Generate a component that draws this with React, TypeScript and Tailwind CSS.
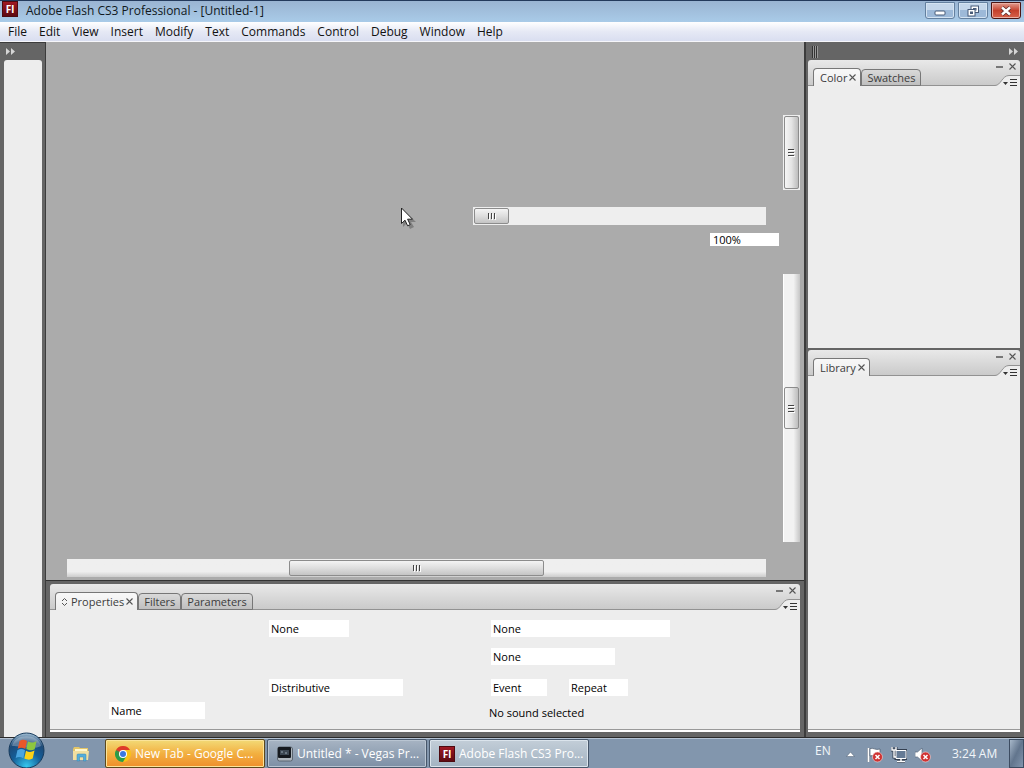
import React from 'react';

const MENUS = ['File', 'Edit', 'View', 'Insert', 'Modify', 'Text', 'Commands', 'Control', 'Debug', 'Window', 'Help'];

function FlashIcon() {
  return (
    <span className="flex h-4 w-4 shrink-0 items-center justify-center border border-[#4d0a10] bg-linear-to-b from-[#a01822] to-[#5e0a12] font-['Open_Sans',sans-serif] text-[10px] leading-none font-bold text-white">
      Fl
    </span>
  );
}

function TitleBar() {
  const button =
    'flex h-[17px] w-[30px] items-center justify-center rounded-b-[3px] border border-[#64809f] bg-linear-to-b from-[#c4d6ea] from-50% to-[#9db9d8] to-50% shadow-[inset_0_0_0_1px_#d4e3f2]';
  return (
    <header className="flex h-[22px] shrink-0 items-start gap-2 border-t border-[#243a5c] bg-linear-to-b from-[#9ab4d2] to-[#a9cbe8] pr-[3px] pl-0.5">
      <FlashIcon />
      <h1 className="flex-1 text-[12px] leading-5 text-[#101820]">Adobe Flash CS3 Professional - [Untitled-1]</h1>
      <div className="flex gap-[3px] pt-px">
        <button aria-label="Minimize" className={button}>
          <svg width="12" height="6" viewBox="0 0 12 6" className="mt-1">
            <rect x="1" y="1" width="10" height="4" rx="1" fill="#fff" stroke="#475a78" />
          </svg>
        </button>
        <button aria-label="Restore" className={button}>
          <svg width="12" height="12" viewBox="0 0 12 12" fill="#fff" stroke="#475a78">
            <rect x="4" y="1" width="7.5" height="6.5" />
            <rect x="6.500" y="3.500" width="2.500" height="1.500" />
            <rect x="1" y="4.500" width="7" height="6.500" />
            <rect x="3.500" y="7" width="2" height="1.500" />
          </svg>
        </button>
        <button
          aria-label="Close"
          className="flex h-[17px] w-[30px] items-center justify-center rounded-b-[3px] border border-[#4b1512] bg-linear-to-b from-[#e09a8e] via-[#c4402c] via-50% to-[#d8614a] shadow-[inset_0_0_0_1px_#eab0a5]"
        >
          <svg width="12" height="10" viewBox="0 0 12 10">
            <path d="M2 1.500 10 8.500M10 1.500 2 8.500" stroke="#5a2a2a" strokeWidth="4" />
            <path d="M2 1.500 10 8.500M10 1.500 2 8.500" stroke="#fff" strokeWidth="2.400" />
          </svg>
        </button>
      </div>
    </header>
  );
}

function MenuBar() {
  return (
    <nav className="flex h-5 shrink-0 items-center gap-3 border-b border-[#f6f6fa] bg-linear-to-b from-white via-[#e6e9f5] via-50% to-[#d9def0] px-2 text-[12px] leading-4 text-[#111]">
      {MENUS.map((name) => (
        <button key={name}>{name}</button>
      ))}
    </nav>
  );
}

function CollapseArrows() {
  return (
    <svg width="9" height="7" viewBox="0 0 9 7" fill="#d6d6d6">
      <path d="M0 0 4 3.500 0 7zM5 0 9 3.500 5 7z" />
    </svg>
  );
}

function CloseMark() {
  return (
    <svg width="7" height="7" viewBox="0 0 7 7" stroke="#555" strokeWidth="1.100">
      <path d="M.5.5 6.500 6.500M6.500.5.5 6.500" />
    </svg>
  );
}

function PanelHeader({ tabs, cycle = false }: { tabs: string[]; cycle?: boolean }) {
  return (
    <div className="flex h-[26px] shrink-0 justify-between rounded-t-[3px] bg-linear-to-b from-[#e9e9e9] to-[#c9c9c9] shadow-[inset_0_-1px_0_#929292]">
      <div role="tablist" className="flex items-end pl-[5px] text-[11px] leading-4 text-[#3c3c3c]">
        {tabs.map((tab, i) => (
          <button
            key={tab}
            role="tab"
            aria-selected={i === 0}
            className={
              i === 0
                ? 'flex h-[18px] items-center gap-0.5 rounded-t-[4px] border border-b-0 border-[#777] bg-linear-to-b from-[#f8f8f8] to-[#ededed] pr-1 pl-[6px]'
                : 'flex h-[17px] items-center rounded-t-[4px] border border-[#777] bg-linear-to-b from-[#d9d9d9] to-[#bfbfbf] px-[5px]'
            }
          >
            {i === 0 && cycle && (
              <svg width="8" height="8" viewBox="0 0 8 8" fill="none" stroke="#555" className="-ml-px">
                <path d="M1 3 3.500.5 6 3M1 5 3.500 7.500 6 5" />
              </svg>
            )}
            {tab}
            {i === 0 && <CloseMark />}
          </button>
        ))}
      </div>
      <div className="flex flex-col items-end justify-between">
        <div className="flex items-center gap-[6px] pt-[3px] pr-1">
          <button aria-label="Minimize panel">
            <svg width="7" height="7" viewBox="0 0 7 7">
              <path d="M0 4h7" stroke="#555" strokeWidth="1.500" />
            </svg>
          </button>
          <button aria-label="Close panel">
            <CloseMark />
          </button>
        </div>
        <button aria-label="Panel menu">
          <svg width="25" height="11" viewBox="0 0 25 11" className="block">
            <path d="M0 11v-.5C6 10.500 7 .5 14 .5H25V11z" fill="#ededed" />
            <path d="M0 10.500C6 10.500 7 .5 14 .5H25" fill="none" stroke="#929292" />
            <path d="M8 7h5l-2.500 3z" fill="#333" />
            <path d="M15 4.500h7M15 7.500h7M15 10.500h7" stroke="#333" />
          </svg>
        </button>
      </div>
    </div>
  );
}

function Grip({ vertical }: { vertical: boolean }) {
  return vertical ? (
    <svg width="7" height="9" viewBox="0 0 7 9" stroke="#444">
      <path d="M0 1.500h6M0 4.500h6M0 7.500h6" />
      <path d="M1 2.500h6M1 5.500h6M1 8.500h6" stroke="#fff" />
    </svg>
  ) : (
    <svg width="9" height="7" viewBox="0 0 9 7" stroke="#444">
      <path d="M1.500 0v6M4.500 0v6M7.500 0v6" />
      <path d="M2.500 1v6M5.500 1v6M8.500 1v6" stroke="#fff" />
    </svg>
  );
}

const V_THUMB =
  'flex w-[15px] items-center justify-center rounded-[2px] border border-[#8c8c8c] bg-linear-to-r from-[#f6f6f6] via-[#e4e4e4] to-[#bdbdbd]';
const H_THUMB =
  'flex h-4 items-center justify-center rounded-[2px] border border-[#8c8c8c] bg-linear-to-b from-[#f4f4f4] via-[#dedede] to-[#c4c4c4]';

function Stage() {
  return (
    <main className="relative flex min-h-0 flex-1 flex-col items-end bg-[#ababab] pt-[73px] pb-[3px]">
      <div role="scrollbar" aria-label="Timeline layers" aria-orientation="vertical" aria-valuenow={0} aria-controls="stage" className="mr-1 flex h-[75px] w-[17px] flex-col border border-[#efefef] bg-[#e4e4e4]">
        <div className={`${V_THUMB} flex-1`}>
          <Grip vertical />
        </div>
      </div>
      <div role="scrollbar" aria-label="Timeline frames" aria-orientation="horizontal" aria-valuenow={0} aria-controls="stage" className="mt-[17px] mr-[38px] flex h-[18px] w-[293px] items-center bg-[#eeeeee] px-px">
        <div className={`${H_THUMB} w-[35px]`}>
          <Grip vertical={false} />
        </div>
      </div>
      <input
        aria-label="Zoom"
        defaultValue="100%"
        className="mt-2 mr-[25px] h-[13px] w-[69px] bg-white pl-[3px] text-[11px] leading-[13px] text-black"
      />
      <div role="scrollbar" aria-label="Stage vertical" aria-orientation="vertical" aria-valuenow={50} aria-controls="stage" className="mt-7 mr-1 flex min-h-0 w-[17px] flex-1 flex-col items-start justify-center border-l border-white bg-linear-to-r from-[#f2f2f2] from-60% to-[#c6c6c6]">
        <div className={`${V_THUMB} h-[42px]`}>
          <Grip vertical />
        </div>
      </div>
      <div className="mt-[17px] flex w-full pr-[38px] pl-[21px]">
        <div role="scrollbar" aria-label="Stage horizontal" aria-orientation="horizontal" aria-valuenow={50} aria-controls="stage" className="flex h-[18px] flex-1 items-center justify-center bg-linear-to-b from-[#efefef] from-70% to-[#cdcdcd]">
          <div className={`${H_THUMB} w-[255px]`}>
            <Grip vertical={false} />
          </div>
        </div>
      </div>
      <svg width="16" height="22" viewBox="0 0 16 22" className="absolute top-[165px] left-[354px]">
        <path d="M3 3v17l4-4 3 6 4-2-3-5h5z" fill="#000" opacity=".25" />
        <path d="M1.500 1v15.500L5 13.200l2.600 5.600 2.600-1.200-2.600-5.400h4.900z" fill="#fff" stroke="#222" />
      </svg>
    </main>
  );
}

function Combo({ label, value, width }: { label: string; value: string; width: string }) {
  return (
    <select aria-label={label} className={`h-[17px] appearance-none bg-white pl-0.5 text-[11px] leading-[17px] text-black ${width}`}>
      <option>{value}</option>
    </select>
  );
}

function PropertiesPanel() {
  return (
    <section className="flex h-[157px] shrink-0 flex-col border-t border-[#333] bg-[#656565] px-1 pt-[3px] pb-[5px]">
      <PanelHeader tabs={['Properties', 'Filters', 'Parameters']} cycle />
      <div className="flex flex-1 items-start border-b-2 border-white bg-[#ededed] pt-[10px] pl-[59px] text-[11px] text-black shadow-[inset_0_-1px_0_#999]">
        <div className="w-[160px] pt-[82px]">
          <input aria-label="Frame label" defaultValue="Name" className="block h-[17px] w-24 bg-white pl-0.5 leading-[17px]" />
        </div>
        <div className="flex w-[222px] flex-col gap-[42px]">
          <Combo label="Tween" value="None" width="w-20" />
          <Combo label="Blend" value="Distributive" width="w-[134px]" />
        </div>
        <div className="flex flex-1 flex-col">
          <Combo label="Sound" value="None" width="w-[179px]" />
          <div className="mt-[11px] flex">
            <Combo label="Effect" value="None" width="w-[124px]" />
          </div>
          <div className="mt-[14px] flex gap-[22px]">
            <Combo label="Sync" value="Event" width="w-14" />
            <Combo label="Repeat mode" value="Repeat" width="w-[59px]" />
          </div>
          <p className="mt-2 -ml-0.5 leading-[17px]">No sound selected</p>
        </div>
      </div>
    </section>
  );
}

function RightDock() {
  return (
    <aside className="flex w-[220px] shrink-0 flex-col border-l-2 border-[#3c3c3c] bg-[#656565] pr-1 pb-[5px] pl-0.5">
      <div className="flex h-[18px] shrink-0 items-center justify-between pr-0.5 pl-1 pt-px">
        <svg width="7" height="12" viewBox="0 0 7 12">
          <path d="M.5 0v12M2.500 0v12M4.500 0v12" stroke="#333" />
          <path d="M1.500 0v12M3.500 0v12M5.500 0v12" stroke="#999" />
        </svg>
        <CollapseArrows />
      </div>
      <section className="flex h-[288px] shrink-0 flex-col">
        <PanelHeader tabs={['Color', 'Swatches']} />
        <div className="flex-1 bg-[#ededed]" />
      </section>
      <section className="mt-0.5 flex min-h-0 flex-1 flex-col">
        <PanelHeader tabs={['Library']} />
        <div className="flex-1 border-b-2 border-white bg-[#ededed] shadow-[inset_0_-1px_0_#999]" />
      </section>
    </aside>
  );
}

function ChromeIcon() {
  return (
    <svg width="16" height="16" viewBox="0 0 16 16">
      <circle cx="8" cy="8" r="8" fill="#fbc116" />
      <path d="M8 8 1.070 4A8 8 0 0 0 8 16L11.400 10z" fill="#2a9d49" />
      <path d="M1.070 4A8 8 0 0 1 14.930 4H8L4.600 10z" fill="#de3a2b" />
      <path d="M1.070 4 4.600 10 8 8z" fill="#2a9d49" />
      <circle cx="8" cy="8" r="4" fill="#fff" />
      <circle cx="8" cy="8" r="3" fill="#3b78e0" />
    </svg>
  );
}

function VegasIcon() {
  return (
    <svg width="16" height="16" viewBox="0 0 16 16">
      <rect x=".5" y="1" width="15" height="14" rx="2" fill="#aeb6be" stroke="#5b6570" />
      <rect x="1" y="1" width="13" height="11" rx="1" fill="#15191f" />
      <rect x="3" y="4" width="9" height="5" fill="#3d4854" />
      <path d="M4 6h2M8 7h2" stroke="#9aa7b4" />
    </svg>
  );
}

function ErrorBadge({ x, y }: { x: number; y: number }) {
  return (
    <g>
      <circle cx={x} cy={y} r="5" fill="#cf3232" stroke="#f4dada" strokeWidth=".6" />
      <path d={`M${x - 2} ${y - 2}l4 4m0-4l-4 4`} stroke="#fff" strokeWidth="1.500" />
    </g>
  );
}

function Tray() {
  return (
    <div className="flex items-stretch text-[12px] leading-4 text-[#f2f6fa]">
      <button aria-label="Input language" className="w-[31px] pb-[6px] text-left">EN</button>
      <button aria-label="Show hidden icons" className="flex w-[21px] items-center pt-0.5">
        <svg width="9" height="5" viewBox="0 0 9 5">
          <path d="M4.500 0 8.500 4.500H.5z" fill="#fff" stroke="#4a5b70" strokeWidth=".5" />
        </svg>
      </button>
      <div className="flex items-center gap-2 pt-0.5">
        <button aria-label="Action center">
          <svg width="16" height="16" viewBox="0 0 16 16">
            <path d="M1.500 1v14" stroke="#46566a" strokeWidth="3" />
            <path d="M1.500 1v14" stroke="#fff" strokeWidth="2" />
            <path d="M3 1.500c4-1 5 2 10 .5v7C9 10.500 7 7.500 3 9z" fill="#fff" stroke="#46566a" strokeWidth=".7" />
            <ErrorBadge x={10.5} y={10} />
          </svg>
        </button>
        <button aria-label="Network">
          <svg width="16" height="16" viewBox="0 0 16 16" fill="none">
            <path d="M5 3.500h10v8H5zM10 12v2.500M6 14.500h8M1 0v3h4V0M3 3v7h2" stroke="#333f50" strokeWidth="3" />
            <path d="M5 3.500h10v8H5z" fill="#667b95" stroke="#fff" />
            <path d="M10 12v2.500M6 14.500h8M1 0v3h4V0M3 3v7h2" stroke="#fff" strokeWidth="1.400" />
          </svg>
        </button>
        <button aria-label="Volume">
          <svg width="16" height="16" viewBox="0 0 16 16">
            <path d="M0 5h2.500L7 1v13l-4.500-4H0z" fill="#fff" stroke="#4a5b70" strokeWidth=".6" />
            <ErrorBadge x={10.5} y={10} />
          </svg>
        </button>
      </div>
      <time className="ml-[21px] w-[57px] self-center">3:24 AM</time>
      <button
        aria-label="Show desktop"
        className="w-[15px] border border-[#3c4c61] bg-linear-to-br from-[#a8b8ca] via-[#62758d] to-[#8295ad]"
      />
    </div>
  );
}

function Taskbar() {
  const task =
    'flex h-[29px] w-[160px] items-center gap-1 rounded-[2px] border pl-[9px] text-left text-[12px] whitespace-nowrap text-white';
  return (
    <footer className="relative flex h-[30px] shrink-0 justify-between border-t border-[#b4c3d4] bg-[#8296ad]">
      <div className="flex items-start gap-0.5">
        <button aria-label="Start" className="absolute -top-[7px] left-2 h-9 w-[37px]">
          <svg width="37" height="36" viewBox="0 0 37 36" className="block">
            <defs>
              <radialGradient id="orb" cx="50%" cy="95%" r="95%">
                <stop offset="0" stopColor="#37c8ee" />
                <stop offset=".45" stopColor="#145e98" />
                <stop offset=".75" stopColor="#1d4a78" />
                <stop offset="1" stopColor="#a8c4d8" />
              </radialGradient>
            </defs>
            <circle cx="18.500" cy="18.500" r="17.500" fill="url(#orb)" stroke="#173b5d" />
            <path d="M4 14C7 1 30 1 33 14 26 18 12 14 4 14z" fill="#fff" opacity=".28" />
            <path d="M11.500 9c3-2 5-1.600 7.500 0l-1.700 8c-3-1.600-5-1.500-7.600-.2z" fill="#e8572a" />
            <path d="M20 9.500c3 1.500 5 1.500 8.500-.2l-1.800 8c-3 1.600-5 1.200-8.400-.2z" fill="#8dc63f" />
            <path d="M9.400 18.200c3-1.700 5-1.400 7.600 0l-1.700 8c-3-1.600-5-1.400-7.600-.1z" fill="#4aa5e0" />
            <path d="M18 18.700c3 1.600 5 1.600 8.500-.1l-1.800 8c-3 1.600-5 1.200-8.400-.1z" fill="#fcd116" />
          </svg>
        </button>
        <button aria-label="Windows Explorer" className="flex h-[29px] w-[103px] items-center pl-[72px]">
          <svg width="18" height="16" viewBox="0 0 18 16">
            <path d="M1 3 2 1h5l1 1h8v11H1z" fill="#e3c567" />
            <path d="M3 3h12v4H3z" fill="#fff7cd" />
            <path d="M1 5h16l-1 9H1z" fill="#f1dfa0" />
            <path d="M5 15V9q0-1 1-1h7q1 0 1 1v6h-2.500v-4h-4v4z" fill="#55aedb" stroke="#3585b3" strokeWidth=".5" />
          </svg>
        </button>
        <button className={`${task} border-[#5c481c] bg-linear-to-b from-[#f2da76] via-[#f2b040] to-[#ee8e2c] shadow-[inset_0_0_0_1px_#fbe49a]`}>
          <ChromeIcon />
          New Tab - Google C...
        </button>
        <button className={`${task} border-[#46566a] bg-linear-to-b from-[#a7b4c3] to-[#7d8fa5] shadow-[inset_0_0_0_1px_#b9c5d2]`}>
          <VegasIcon />
          Untitled * - Vegas Pr...
        </button>
        <button className={`${task} border-[#46566a] bg-linear-to-b from-[#c3ced8] to-[#a3b3c2] shadow-[inset_0_0_0_1px_#dbe4ec]`}>
          <FlashIcon />
          Adobe Flash CS3 Pro...
        </button>
      </div>
      <Tray />
    </footer>
  );
}

export default function App() {
  return (
    <div className="flex h-screen w-full flex-col overflow-hidden bg-[#656565] font-['Open_Sans','Noto_Sans',sans-serif]">
      <TitleBar />
      <MenuBar />
      <div className="flex min-h-0 flex-1 border-b border-[#2b2b2b]">
        <aside className="flex w-[46px] shrink-0 flex-col border-t border-r border-[#3c3c3c] bg-[#656565] pr-[3px] pl-1">
          <div className="flex h-[17px] shrink-0 items-center pl-0.5">
            <CollapseArrows />
          </div>
          <div className="flex-1 rounded-t-[3px] bg-[#ededed]" />
        </aside>
        <div id="stage" className="flex min-w-0 flex-1 flex-col">
          <Stage />
          <PropertiesPanel />
        </div>
        <RightDock />
      </div>
      <Taskbar />
    </div>
  );
}
